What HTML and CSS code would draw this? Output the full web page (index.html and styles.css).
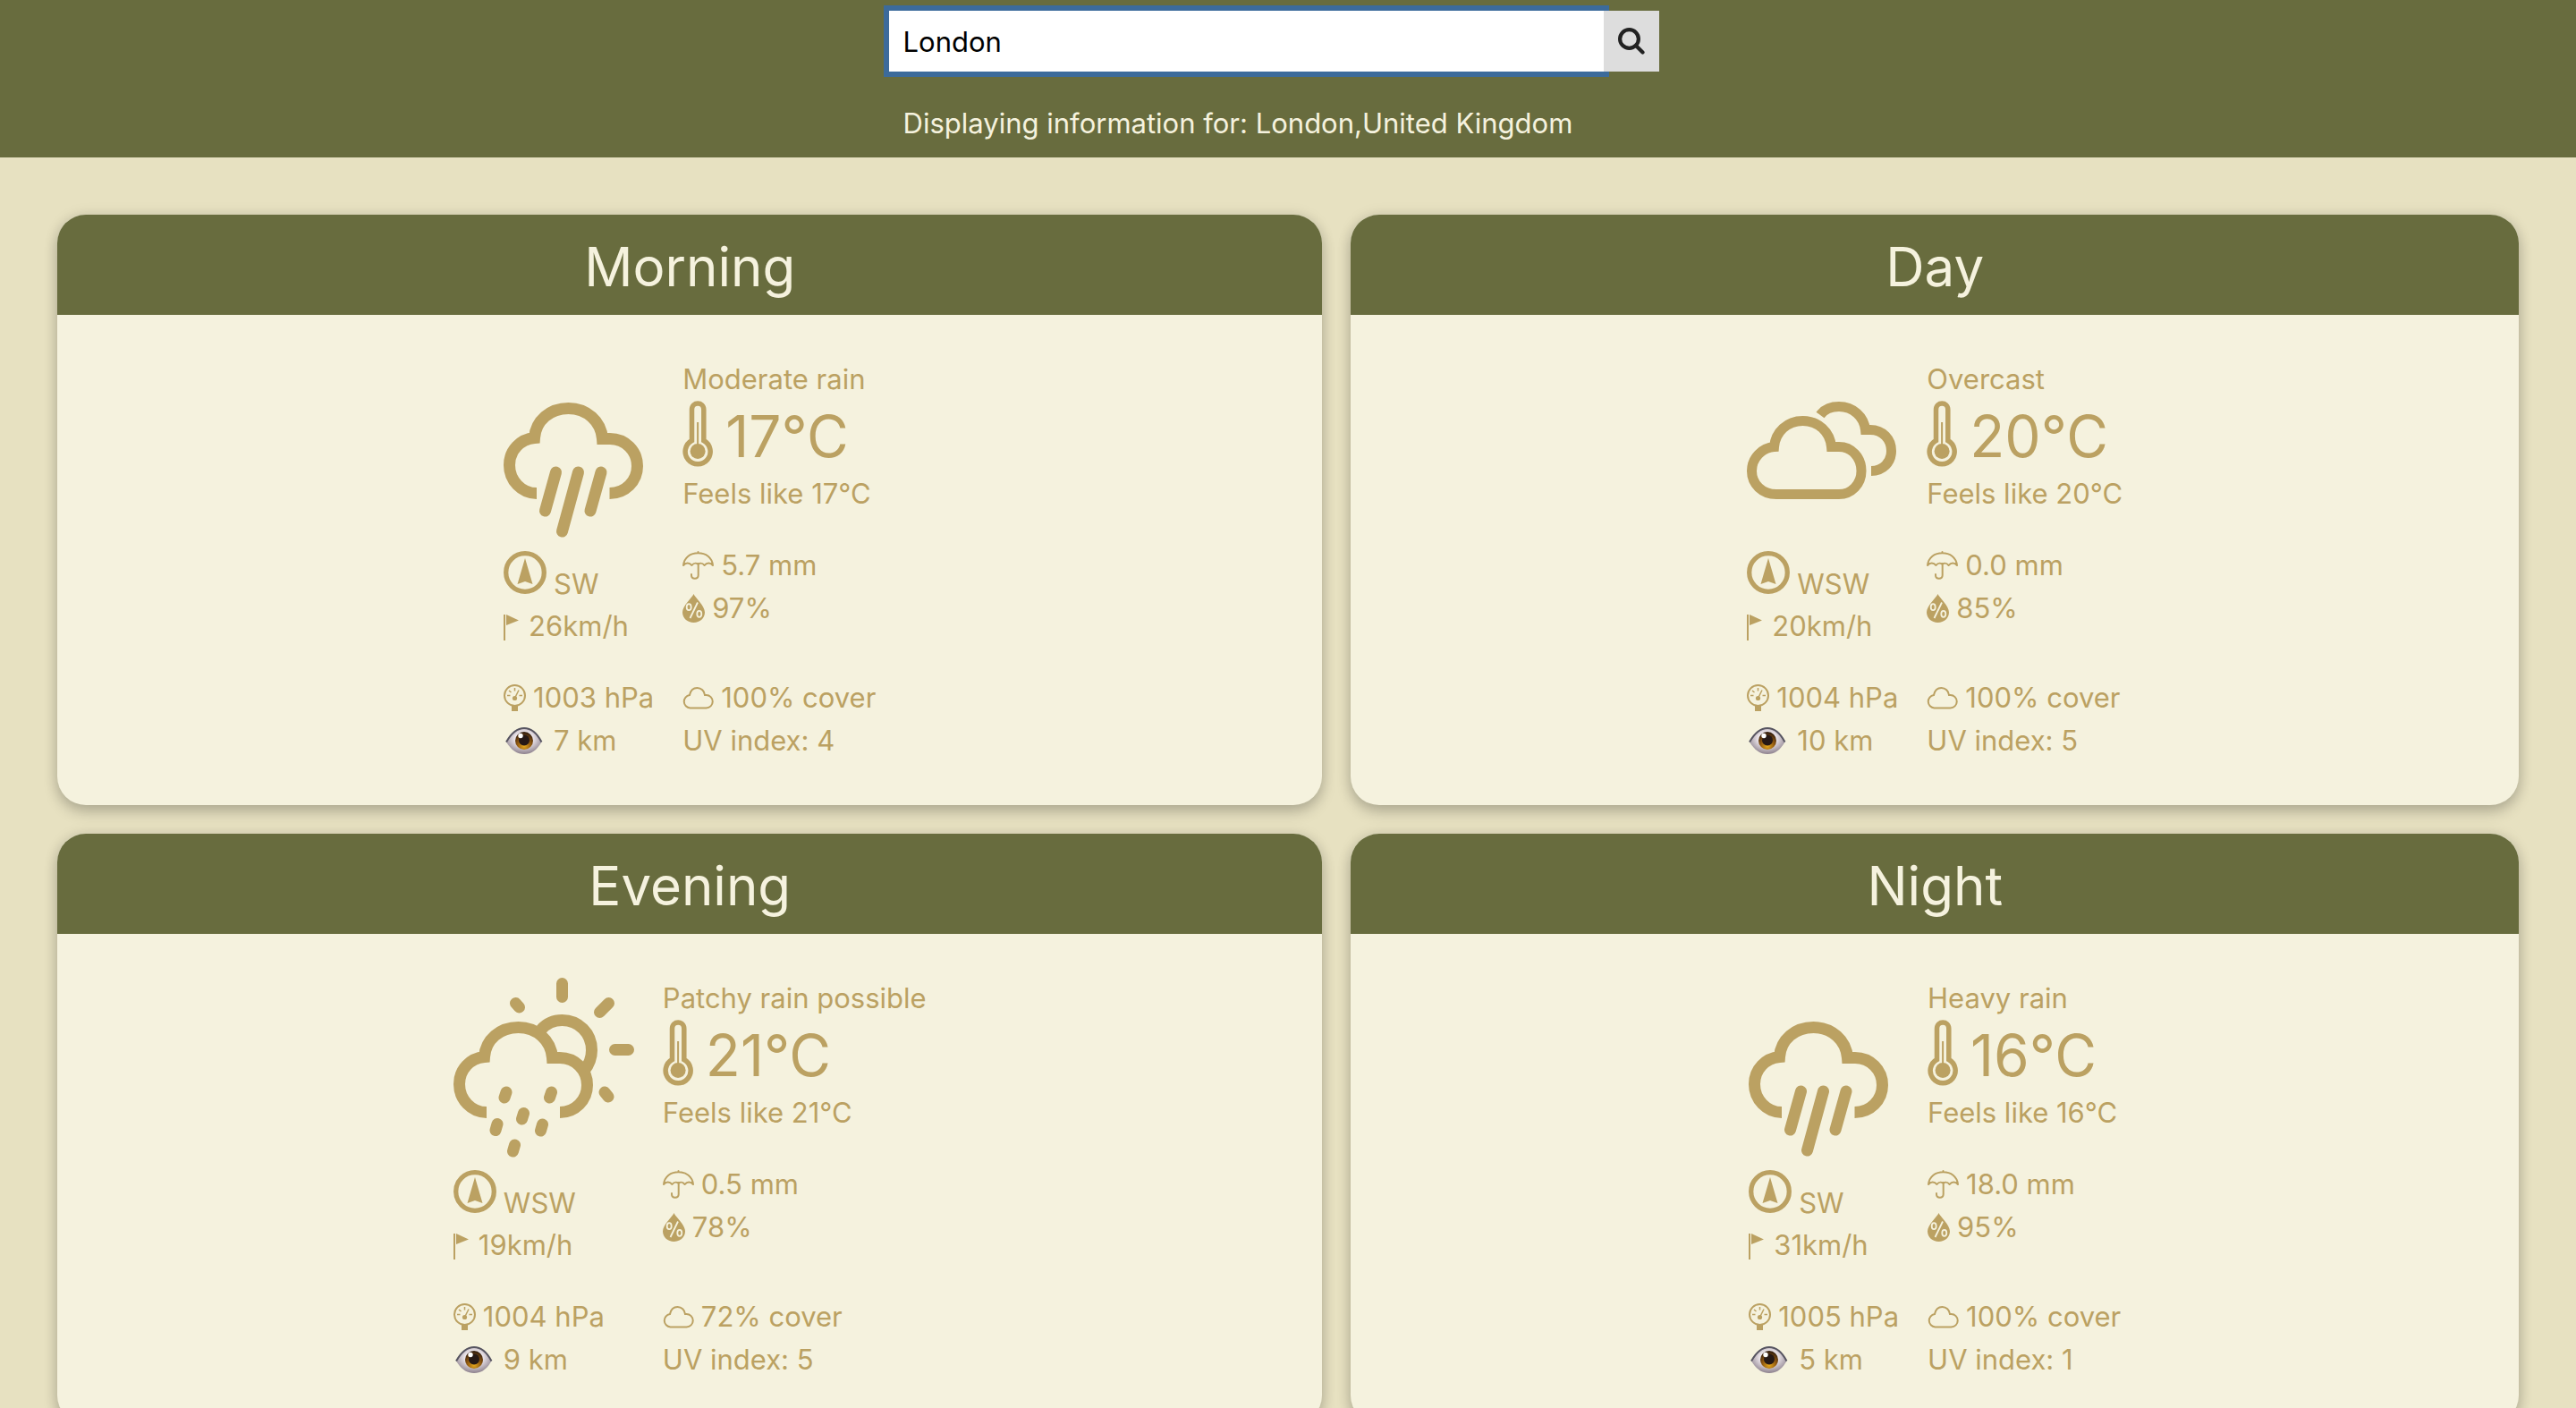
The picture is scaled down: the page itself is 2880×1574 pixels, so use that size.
FILE: index.html
```html
<!DOCTYPE html>
<html lang="en">
<head>
<meta charset="utf-8">
<title>Weather</title>
<link rel="stylesheet" href="styles.css">
</head>
<body>
<svg class="sprite" aria-hidden="true">
  <symbol id="rain" viewBox="0 0 156 208">
    <g fill="none" stroke="currentColor" stroke-width="13">
      <path d="M37 151.500C20 151.500 6.500 137 6.500 120C6.500 103 19 91 34.500 89.500C36 70 52 56.500 72.500 56.500C93 56.500 109 71 110.500 90.500H119C136 90.500 149.500 104 149.500 121C149.500 138 136 151.500 118.500 151.500"/>
      <path stroke-linecap="round" d="M58.500 128L46.500 171M83.500 128L65.500 194M109 128L97 171"/>
    </g>
  </symbol>
  <symbol id="overcast" viewBox="0 0 168 208">
    <g fill="none" stroke="currentColor" stroke-width="11">
      <path d="M33 152.500C17 152.500 5.500 141 5.500 126.500C5.500 112 17 100.500 30.500 99.500C32 83 45 70.500 62.500 70.500C80 70.500 93 83 94.500 99.500H103C117 99.500 128 111 128 126.500C128 141 117 152.500 103 152.500Z"/>
      <path d="M82 64C87 57 95 54.500 103 54.500C119 54.500 131 66 132.500 80.500H138C152 80.500 161.500 91 161.500 104C161.500 117 152 126.500 139 126.500"/>
    </g>
  </symbol>
  <symbol id="patchy" viewBox="0 0 202 208">
    <g fill="none" stroke="currentColor" stroke-width="13">
      <path d="M37 151.500C20 151.500 6.500 137 6.500 120C6.500 103 19 91 34.500 89.500C36 70 52 56.500 72.500 56.500C93 56.500 109 71 110.500 90.500H119C136 90.500 149.500 104 149.500 121C149.500 138 136 151.500 119 151.500"/>
      <path d="M98 59C104 52 112 48.500 121.500 48.500C140 48.500 154.500 63 154.500 82C154.500 92 151 99 146 105"/>
      <path stroke-linecap="round" d="M121.500 7.500V22.500M173.500 29.500L163.500 39.500M180.500 81.500H195.500M169 129L173 134M69.500 29.500L73.500 34M59 129L57 135M109.500 129L107.500 135M78.500 152.500L76.500 159M49 164.500L47 171.500M99.500 165L97.500 172M68.500 188L66.500 195"/>
    </g>
  </symbol>
  <symbol id="thermo" viewBox="0 0 34 80">
    <path fill="none" stroke="currentColor" stroke-width="5.500" d="M10.500 44.500V10C10.500 0.800 23.800 0.800 23.800 10V44.500A14 14 0 1 1 10.500 44.500Z"/>
    <path stroke="currentColor" stroke-width="2" d="M17.100 24V52"/>
    <circle cx="17.100" cy="56.500" r="8.500" fill="currentColor"/>
  </symbol>
  <symbol id="compass" viewBox="0 0 48 48">
    <circle cx="24" cy="24" r="21.300" fill="none" stroke="currentColor" stroke-width="5.300"/>
    <path fill="currentColor" d="M24 8L32.500 37L24 34L15.500 37Z"/>
  </symbol>
  <symbol id="flag" viewBox="0 0 20 32">
    <path fill="currentColor" d="M0 3H2V32H0ZM3 3L17 9.500L3 15Z"/>
  </symbol>
  <symbol id="umbrella" viewBox="0 0 35 32">
    <g fill="none" stroke="currentColor" stroke-width="2" stroke-linecap="round" stroke-linejoin="round">
      <path d="M1 16C2 7 9 2.200 17.500 2.200S33 7 34 16C31 12.700 27.500 12.700 24.500 16C22 12.700 20 13.200 17.500 14.500C15 13.200 13 12.700 10.500 16C7.500 12.700 4 12.700 1 16ZM17.500 1V2"/>
      <path d="M17.700 14V27C17.700 32 10 32 10 27V26"/>
    </g>
  </symbol>
  <symbol id="drop" viewBox="0 0 25 32">
    <path fill="currentColor" d="M12.500 0C14 4 25 13 25 20.500C25 27 19.500 32 12.500 32S0 27 0 20.500C0 13 11 4 12.500 0Z"/>
    <g class="cut" fill="none" stroke-width="1.800">
      <path d="M17 9.500L8.500 27"/>
      <ellipse cx="7.200" cy="14.700" rx="2.500" ry="3.500"/>
      <ellipse cx="18.800" cy="22.300" rx="2.500" ry="3.500"/>
    </g>
  </symbol>
  <symbol id="gauge" viewBox="0 0 25 32">
    <circle cx="12.500" cy="13.500" r="11.500" fill="none" stroke="currentColor" stroke-width="2"/>
    <path fill="currentColor" d="M9 24H16V31H9Z"/>
    <circle cx="12.500" cy="16.500" r="2.600" fill="currentColor"/>
    <path fill="none" stroke="currentColor" stroke-width="1.500" d="M12.500 16.500L17 7.500M12.500 5V8.500M4 13.500H7.500M17.500 13.500H21M6 8L8.500 10"/>
  </symbol>
  <symbol id="cloud" viewBox="0 0 35 32">
    <path fill="none" stroke="currentColor" stroke-width="2" d="M8.500 27.500A7.300 7.300 0 0 1 8 13C9 8 12 5 16.500 5C21 5 24.500 8.500 25 13H26.500A7.200 7.200 0 0 1 26.500 27.500Z"/>
  </symbol>
  <symbol id="eye" viewBox="0 0 48 32">
    <defs>
      <radialGradient id="white" cx=".5" cy=".4" r=".6"><stop offset=".4" stop-color="#efe9ee"/><stop offset="1" stop-color="#8c808c"/></radialGradient>
      <radialGradient id="iris" cx=".5" cy=".8" r=".75"><stop offset="0" stop-color="#e6a81c"/><stop offset=".55" stop-color="#8a5410"/><stop offset="1" stop-color="#36200f"/></radialGradient>
    </defs>
    <path fill="url(#white)" d="M3 17.500C9 7 15 2 23 2S37 7 42.500 17.500C37 27 31 31 23 31S9 27 3 17.500Z"/>
    <path fill="none" stroke="#565460" stroke-width="2" d="M3 17.500C9 7 15 2 23 2S37 7 42.500 17.500"/>
    <circle cx="23" cy="16" r="10" fill="url(#iris)"/>
    <circle cx="23" cy="15.500" r="6" fill="#261916"/>
    <circle cx="19" cy="10.500" r="2.700" fill="#fff"/>
  </symbol>
</svg>

<header class="top">
  <form class="search">
    <input class="search-box" type="text" value="London" aria-label="City">
    <button class="search-button" type="button" aria-label="Search">
      <svg width="30" height="30" viewBox="0 0 30 30"><g fill="none" stroke="#222" stroke-width="4.200" stroke-linecap="round"><circle cx="12.500" cy="12.500" r="10.400"/><path d="M20 20L27.500 27.500"/></g></svg>
    </button>
  </form>
  <p class="place">Displaying information for: London,United Kingdom</p>
</header>

<main class="cards">
  <section class="card">
    <h2 class="card-title">Morning</h2>
    <div class="facts">
      <svg class="sky" width="156"><use href="#rain"/></svg>
      <div>
        <p>Moderate rain</p>
        <p class="temp"><svg width="34" height="80"><use href="#thermo"/></svg>17°C</p>
        <p>Feels like 17°C</p>
      </div>
      <div>
        <p class="line wind"><svg width="48" height="48"><use href="#compass"/></svg>SW</p>
        <p class="line"><svg width="20" height="32"><use href="#flag"/></svg>26km/h</p>
      </div>
      <div>
        <p class="line"><svg width="35" height="32"><use href="#umbrella"/></svg>5.7 mm</p>
        <p class="line"><svg width="25" height="32"><use href="#drop"/></svg>97%</p>
      </div>
      <div>
        <p class="line"><svg width="25" height="32"><use href="#gauge"/></svg>1003 hPa</p>
        <p class="line"><svg width="48" height="32"><use href="#eye"/></svg>7 km</p>
      </div>
      <div>
        <p class="line"><svg width="35" height="32"><use href="#cloud"/></svg>100% cover</p>
        <p>UV index: 4</p>
      </div>
    </div>
  </section>

  <section class="card">
    <h2 class="card-title">Day</h2>
    <div class="facts">
      <svg class="sky" width="168"><use href="#overcast"/></svg>
      <div>
        <p>Overcast</p>
        <p class="temp"><svg width="34" height="80"><use href="#thermo"/></svg>20°C</p>
        <p>Feels like 20°C</p>
      </div>
      <div>
        <p class="line wind"><svg width="48" height="48"><use href="#compass"/></svg>WSW</p>
        <p class="line"><svg width="20" height="32"><use href="#flag"/></svg>20km/h</p>
      </div>
      <div>
        <p class="line"><svg width="35" height="32"><use href="#umbrella"/></svg>0.0 mm</p>
        <p class="line"><svg width="25" height="32"><use href="#drop"/></svg>85%</p>
      </div>
      <div>
        <p class="line"><svg width="25" height="32"><use href="#gauge"/></svg>1004 hPa</p>
        <p class="line"><svg width="48" height="32"><use href="#eye"/></svg>10 km</p>
      </div>
      <div>
        <p class="line"><svg width="35" height="32"><use href="#cloud"/></svg>100% cover</p>
        <p>UV index: 5</p>
      </div>
    </div>
  </section>

  <section class="card">
    <h2 class="card-title">Evening</h2>
    <div class="facts">
      <svg class="sky" width="202"><use href="#patchy"/></svg>
      <div>
        <p>Patchy rain possible</p>
        <p class="temp"><svg width="34" height="80"><use href="#thermo"/></svg>21°C</p>
        <p>Feels like 21°C</p>
      </div>
      <div>
        <p class="line wind"><svg width="48" height="48"><use href="#compass"/></svg>WSW</p>
        <p class="line"><svg width="20" height="32"><use href="#flag"/></svg>19km/h</p>
      </div>
      <div>
        <p class="line"><svg width="35" height="32"><use href="#umbrella"/></svg>0.5 mm</p>
        <p class="line"><svg width="25" height="32"><use href="#drop"/></svg>78%</p>
      </div>
      <div>
        <p class="line"><svg width="25" height="32"><use href="#gauge"/></svg>1004 hPa</p>
        <p class="line"><svg width="48" height="32"><use href="#eye"/></svg>9 km</p>
      </div>
      <div>
        <p class="line"><svg width="35" height="32"><use href="#cloud"/></svg>72% cover</p>
        <p>UV index: 5</p>
      </div>
    </div>
  </section>

  <section class="card">
    <h2 class="card-title">Night</h2>
    <div class="facts">
      <svg class="sky" width="156"><use href="#rain"/></svg>
      <div>
        <p>Heavy rain</p>
        <p class="temp"><svg width="34" height="80"><use href="#thermo"/></svg>16°C</p>
        <p>Feels like 16°C</p>
      </div>
      <div>
        <p class="line wind"><svg width="48" height="48"><use href="#compass"/></svg>SW</p>
        <p class="line"><svg width="20" height="32"><use href="#flag"/></svg>31km/h</p>
      </div>
      <div>
        <p class="line"><svg width="35" height="32"><use href="#umbrella"/></svg>18.0 mm</p>
        <p class="line"><svg width="25" height="32"><use href="#drop"/></svg>95%</p>
      </div>
      <div>
        <p class="line"><svg width="25" height="32"><use href="#gauge"/></svg>1005 hPa</p>
        <p class="line"><svg width="48" height="32"><use href="#eye"/></svg>5 km</p>
      </div>
      <div>
        <p class="line"><svg width="35" height="32"><use href="#cloud"/></svg>100% cover</p>
        <p>UV index: 1</p>
      </div>
    </div>
  </section>
</main>
</body>
</html>
```
FILE: styles.css
```css
* {
  box-sizing: border-box;
}

body {
  margin: 0;
  background: #e7e1c1;
  color: #bba162;
  font: 430 31px/48px Inter, "Liberation Sans", sans-serif;
}

p,
h2 {
  margin: 0;
}

.sprite {
  position: absolute;
  width: 0;
  height: 0;
}

.top {
  padding: 12px 35.600% 14px 34.500%;
  background: #686c3e;
  color: #f5f2de;
}

.search {
  display: flex;
  height: 68px;
}

.search-box {
  flex: 1;
  min-width: 0;
  padding: 2px 16px 0;
  border: 0;
  background: #fff;
  color: #000;
  font: inherit;
  outline: 0;
  border-radius: 0;
  box-shadow: 0 0 0 6px #3c6b9b;
}

.search-button {
  display: flex;
  align-items: center;
  justify-content: center;
  position: relative;
  width: 62px;
  padding: 0;
  border: 0;
  background: #ddd;
}

.place {
  padding: 34px 16px 0;
  white-space: nowrap;
}

.cards {
  display: grid;
  grid-template-columns: auto auto;
  gap: 32px;
  padding: 64px;
}

.card {
  overflow: hidden;
  border-radius: 32px;
  background: #f5f2de;
  box-shadow: 0 8px 16px rgba(0, 0, 0, 0.2), 0 0 16px rgba(0, 0, 0, 0.1);
}

.card-title {
  padding: 10px 8px 6px;
  background: #686c3e;
  color: #f5f2de;
  font-size: 60px;
  font-weight: 400;
  line-height: 96px;
  text-align: center;
}

.facts {
  display: grid;
  grid-template-columns: auto auto;
  justify-content: center;
  gap: 32px;
  padding: 48px;
  white-space: nowrap;
}

.sky {
  height: 208px;
  margin-bottom: -32px;
}

.temp {
  display: flex;
  gap: 14px;
  font-size: 64px;
  font-weight: 400;
  line-height: 80px;
}

.line {
  display: flex;
  align-items: center;
  gap: 8px;
}

.wind {
  align-items: baseline;
  height: 68px;
  padding-top: 8px;
}

.cut {
  stroke: #f5f2de;
}
```
